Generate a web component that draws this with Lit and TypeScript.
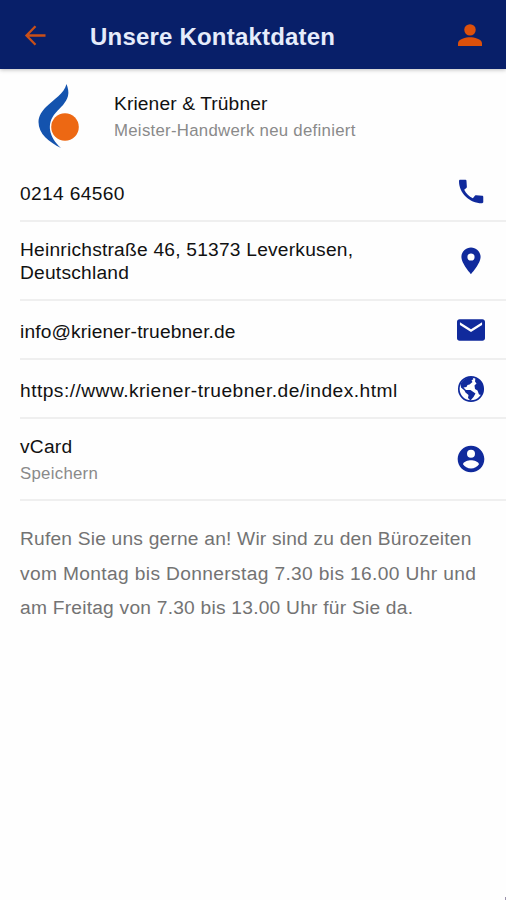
import { LitElement, html, css, svg } from "lit";
import { customElement } from "lit/decorators.js";

const icons = {
  call: svg`<svg viewBox="0 0 24 24"><path d="M4 2.900H7.900c.4 0 .7.3.7.7l.3 4.500c0 .4-.1.7-.4.9L6.900 10.300c1.500 2.900 3.600 4.900 6.500 6.400l1.500-1.900c.3-.3.6-.4 1-.4l4.500.4c.5 0 .8.4.8.8v3.900c0 .5-.4.9-.9.9C10.600 20.400 3 12.500 3 3.900c0-.6.400-1 1-1z"/></svg>`,
  pin: svg`<svg viewBox="0 0 24 24"><path d="M12 1.800C8.100 1.800 4.800 5 4.800 8.900c0 5.250 7.200 13 7.200 13s7.200-7.750 7.200-13c0-3.900-3.300-7.100-7.200-7.100zm0 9.900a2.700 2.700 0 1 1 0-5.400 2.700 2.700 0 0 1 0 5.400z"/></svg>`,
  mail: svg`<svg viewBox="0 0 24 24"><path d="M20.600 4H3.400c-1 0-1.900.8-1.900 1.900v12.200c0 1 .8 1.900 1.900 1.900h17.200c1 0 1.900-.8 1.900-1.900V5.900c0-1.100-.9-1.900-1.900-1.900zm-.3 4.200L12 13.500 3.700 8.200V6.100l8.300 5.300 8.300-5.300z"/></svg>`,
  globe: svg`<svg viewBox="0 0 32 32">
    <circle cx="16" cy="16" r="12.200" fill="none" stroke="#102a9c" stroke-width="1.700" />
    <path d="M5.500 11C8 6.500 12 4 17 4L18.500 6L16.500 7.500L17.500 9L14.500 11.500L12.500 12L11.500 14L8.500 14.500L11 17L15.500 17L20.500 20.500L18.500 24L15.500 27.500L13 25L13.500 22L10.500 19.500L9.500 17.500L6 14.500Z" />
    <path d="M20.500 4.500C26 7 28.500 11 28.500 17L26.500 22L24 21.500L22.500 17.500L20 16L19.500 12.500L21.500 10.500L20 8.500Z" />
  </svg>`,
  contact: svg`<svg viewBox="0 0 24 24"><path d="M12 2C6.480 2 2 6.480 2 12s4.480 10 10 10 10-4.480 10-10S17.520 2 12 2zm0 3a3 3 0 1 1 0 6 3 3 0 0 1 0-6zm0 14.200c-2.500 0-4.710-1.280-6-3.220.03-1.990 4-3.080 6-3.080s5.970 1.090 6 3.080c-1.290 1.940-3.500 3.220-6 3.220z"/></svg>`,
};

@customElement("app-root")
export class AppRoot extends LitElement {
  static styles = css`
    :host {
      display: block;
      height: 900px;
      overflow: hidden;
      background: #fefefe;
      color: #111;
      font-family: "Liberation Sans", Arial, sans-serif;
      font-size: 19.2px;
      line-height: 23px;
    }
    .bar {
      display: flex;
      align-items: center;
      height: 69px;
      box-sizing: border-box;
      padding: 3px 20px 0 24px;
      background: #081f69;
      box-shadow: 0 1px 4px rgba(0, 0, 0, 0.25);
    }
    .bar svg {
      display: block;
      flex: none;
    }
    .title {
      flex: 1;
      margin: 1px 0 0 44px;
      font-size: 24px;
      line-height: 30px;
      font-weight: 700;
      letter-spacing: 0.2px;
      color: #e6ecfb;
      white-space: nowrap;
    }
    .company {
      display: flex;
      height: 97px;
      box-sizing: border-box;
      padding: 14px 0 0 36px;
    }
    .logo {
      width: 44px;
      height: 68px;
      margin-right: 34px;
    }
    .names {
      padding-top: 9px;
      letter-spacing: 0.12px;
    }
    .sub {
      font-size: 16.8px;
      line-height: 24px;
      letter-spacing: 0.28px;
      color: #8a8a8a;
      margin-top: 4px;
    }
    .row {
      display: flex;
      align-items: center;
      justify-content: space-between;
      box-sizing: border-box;
      margin-left: 20px;
      padding-right: 19px;
      border-bottom: 2px solid #efefef;
    }
    .tel {
      height: 56px;
      padding-bottom: 2px;
      letter-spacing: 0.35px;
    }
    .tel .text { padding-top: 2px; }
    .address {
      height: 79px;
      letter-spacing: 0.22px;
    }
    .address .text { padding-top: 1px; }
    .mail {
      height: 59px;
      letter-spacing: 0.13px;
    }
    .web {
      height: 59px;
      letter-spacing: 0.46px;
    }
    .mail .text, .web .text { padding-top: 3px; }
    .vcard {
      height: 82px;
      letter-spacing: 0.25px;
    }
    .vcard .text { padding-top: 3px; }
    .row svg {
      display: block;
      width: 32px;
      height: 32px;
      fill: #102a9c;
    }
    .note {
      margin: 21px 20px 0;
      font-size: 19.2px;
      line-height: 34.6px;
      color: #737373;
    }
    .note div { white-space: nowrap; }
    .note div:nth-child(1) { letter-spacing: 0.2px; }
    .note div:nth-child(2) { letter-spacing: 0.35px; }
    .note div:nth-child(3) { letter-spacing: 0.23px; }
    .corner {
      position: absolute;
      left: 505px;
      top: 897px;
      width: 1px;
      height: 3px;
      background: #9c93ad;
    }
  `;

  private row(kind: string, text: unknown, icon: unknown) {
    return html`<div class="row ${kind}"><div class="text">${text}</div>${icon}</div>`;
  }

  render() {
    return html`
      <header class="bar">
        <svg width="22" height="22" viewBox="0 0 22 22" fill="none" stroke="#c94f18" stroke-width="2.3">
          <path d="M21.500 10.500H3M11.500 1.300L2.500 10.500l9 9.200" />
        </svg>
        <h1 class="title">Unsere Kontaktdaten</h1>
        <svg width="32" height="32" viewBox="0 0 24 24" fill="#dc500b">
          <circle cx="12" cy="7.400" r="4.300" />
          <path d="M12 13c-3 0-9 1.400-9 4.500v2h18v-2c0-3.100-6-4.500-9-4.500z" />
        </svg>
      </header>
      <section class="company">
        <svg class="logo" viewBox="0 0 44 68">
          <path fill="#1453ae" d="M30.500 1C32 5 33 9 32 13C30 20 25 24 19.500 30C10 41 13 54 25 65C13 59 2.500 51 2.500 39C2.500 33 6 28 10 24C18 16 28 11 30.500 1Z" />
          <circle cx="29" cy="44" r="13.800" fill="#ed6813" />
        </svg>
        <div class="names">
          <div>Kriener &amp; Trübner</div>
          <div class="sub">Meister-Handwerk neu definiert</div>
        </div>
      </section>
      ${this.row("tel", "0214 64560", icons.call)}
      ${this.row("address", html`Heinrichstraße 46, 51373 Leverkusen,<br />Deutschland`, icons.pin)}
      ${this.row("mail", "info@kriener-truebner.de", icons.mail)}
      ${this.row("web", "https://www.kriener-truebner.de/index.html", icons.globe)}
      ${this.row("vcard", html`vCard<div class="sub">Speichern</div>`, icons.contact)}
      <div class="note">
        <div>Rufen Sie uns gerne an! Wir sind zu den Bürozeiten</div>
        <div>vom Montag bis Donnerstag 7.30 bis 16.00 Uhr und</div>
        <div>am Freitag von 7.30 bis 13.00 Uhr für Sie da.</div>
      </div>
      <div class="corner"></div>
    `;
  }
}
